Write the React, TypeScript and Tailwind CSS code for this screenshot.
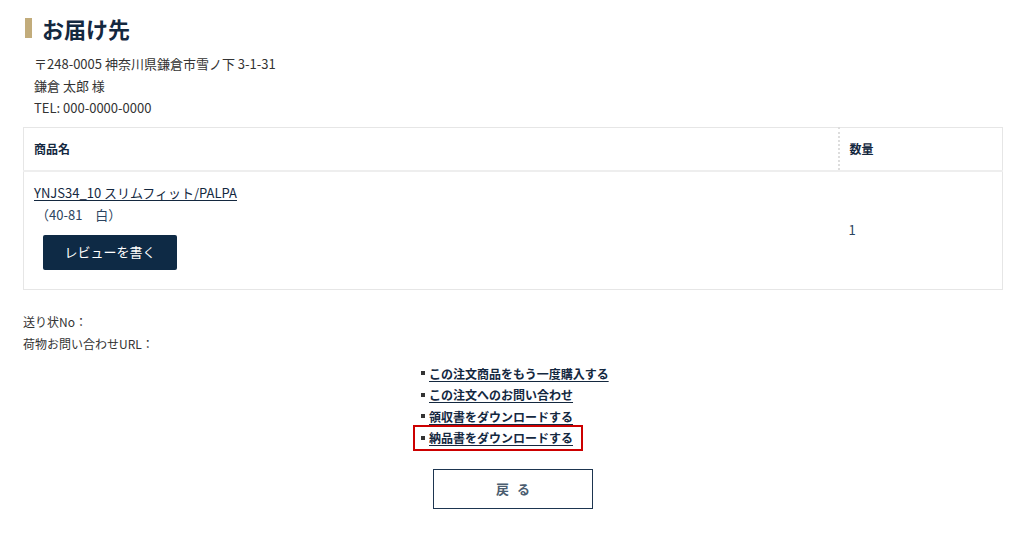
export default function App() {
  const links = [
    "この注文商品をもう一度購入する",
    "この注文へのお問い合わせ",
    "領収書をダウンロードする",
    "納品書をダウンロードする",
  ];

  return (
    <div
      className="min-h-screen bg-white text-[#333] pl-[23px] pt-[15px]"
      style={{ fontFamily: '"Noto Sans CJK JP", "Noto Sans", sans-serif' }}
    >
      <div className="w-[980px]">
        <h2 className="flex items-center h-[26px]">
          <span className="w-[7px] h-[20px] bg-[#c2ac7b] ml-[2px] mr-[10px]" />
          <span className="text-[22px] font-bold text-[#14283f] leading-none">お届け先</span>
        </h2>

        <div className="pl-[11px] pt-[12px] text-[13px] leading-[22px] text-[#333]">
          <p>〒248-0005 神奈川県鎌倉市雪ノ下 3-1-31</p>
          <p>鎌倉 太郎 様</p>
          <p>TEL: 000-0000-0000</p>
        </div>

        <table className="w-full mt-[8px] border border-[#e6e6e6] border-collapse text-[12px]">
          <thead>
            <tr className="border-b-2 border-[#eeeeee] h-[43px]">
              <th className="text-left font-bold text-[#14283f] pl-[10px] w-[815px]">商品名</th>
              <th className="text-left font-bold text-[#14283f] pl-[10px] border-l-2 border-t border-dotted border-[#dddddd]">
                数量
              </th>
            </tr>
          </thead>
          <tbody>
            <tr>
              <td className="pl-[10px] pt-[10px] pb-[19px] align-top">
                <a href="#" className="text-[13px] text-[#14283f] underline underline-offset-2 leading-[22px] block">
                  YNJS34_10 スリムフィット/PALPA
                </a>
                <p className="text-[13px] leading-[22px] text-[#2c4460] pl-[2px]">（40-81　白）</p>
                <button className="mt-[9px] ml-[9px] w-[134px] h-[35px] bg-[#0e2a45] text-white text-[13px] rounded-[2px]">
                  レビューを書く
                </button>
              </td>
              <td className="pl-[10px] text-[13px] text-[#2c4460] align-middle">1</td>
            </tr>
          </tbody>
        </table>

        <div className="mt-[21px] text-[12px] leading-[22px] text-[#333]">
          <p>送り状No：</p>
          <p>荷物お問い合わせURL：</p>
        </div>

        <ul className="mt-[8px] flex flex-col items-start ml-[393px] text-[12px] font-bold leading-[21.5px]">
          {links.map((t, i) => (
            <li
              key={t}
              className={
                i === 3
                  ? "flex items-center border-2 border-[#cc0000] -ml-[3px] pl-[1px] pr-[8px] h-[26px] mt-[-2px]"
                  : "flex items-center"
              }
            >
              <span className="w-[4px] h-[4px] bg-[#333] mr-[4px] ml-[5px]" />
              <a href="#" className="text-[#14283f] underline underline-offset-2">
                {t}
              </a>
            </li>
          ))}
        </ul>

        <div className="flex justify-center mt-[18px]">
          <button className="w-[160px] h-[40px] border border-[#1d3550] text-[13px] font-bold text-[#4b5d70] tracking-[0.2em] pl-[0.2em]">
            戻 る
          </button>
        </div>
      </div>
    </div>
  );
}
